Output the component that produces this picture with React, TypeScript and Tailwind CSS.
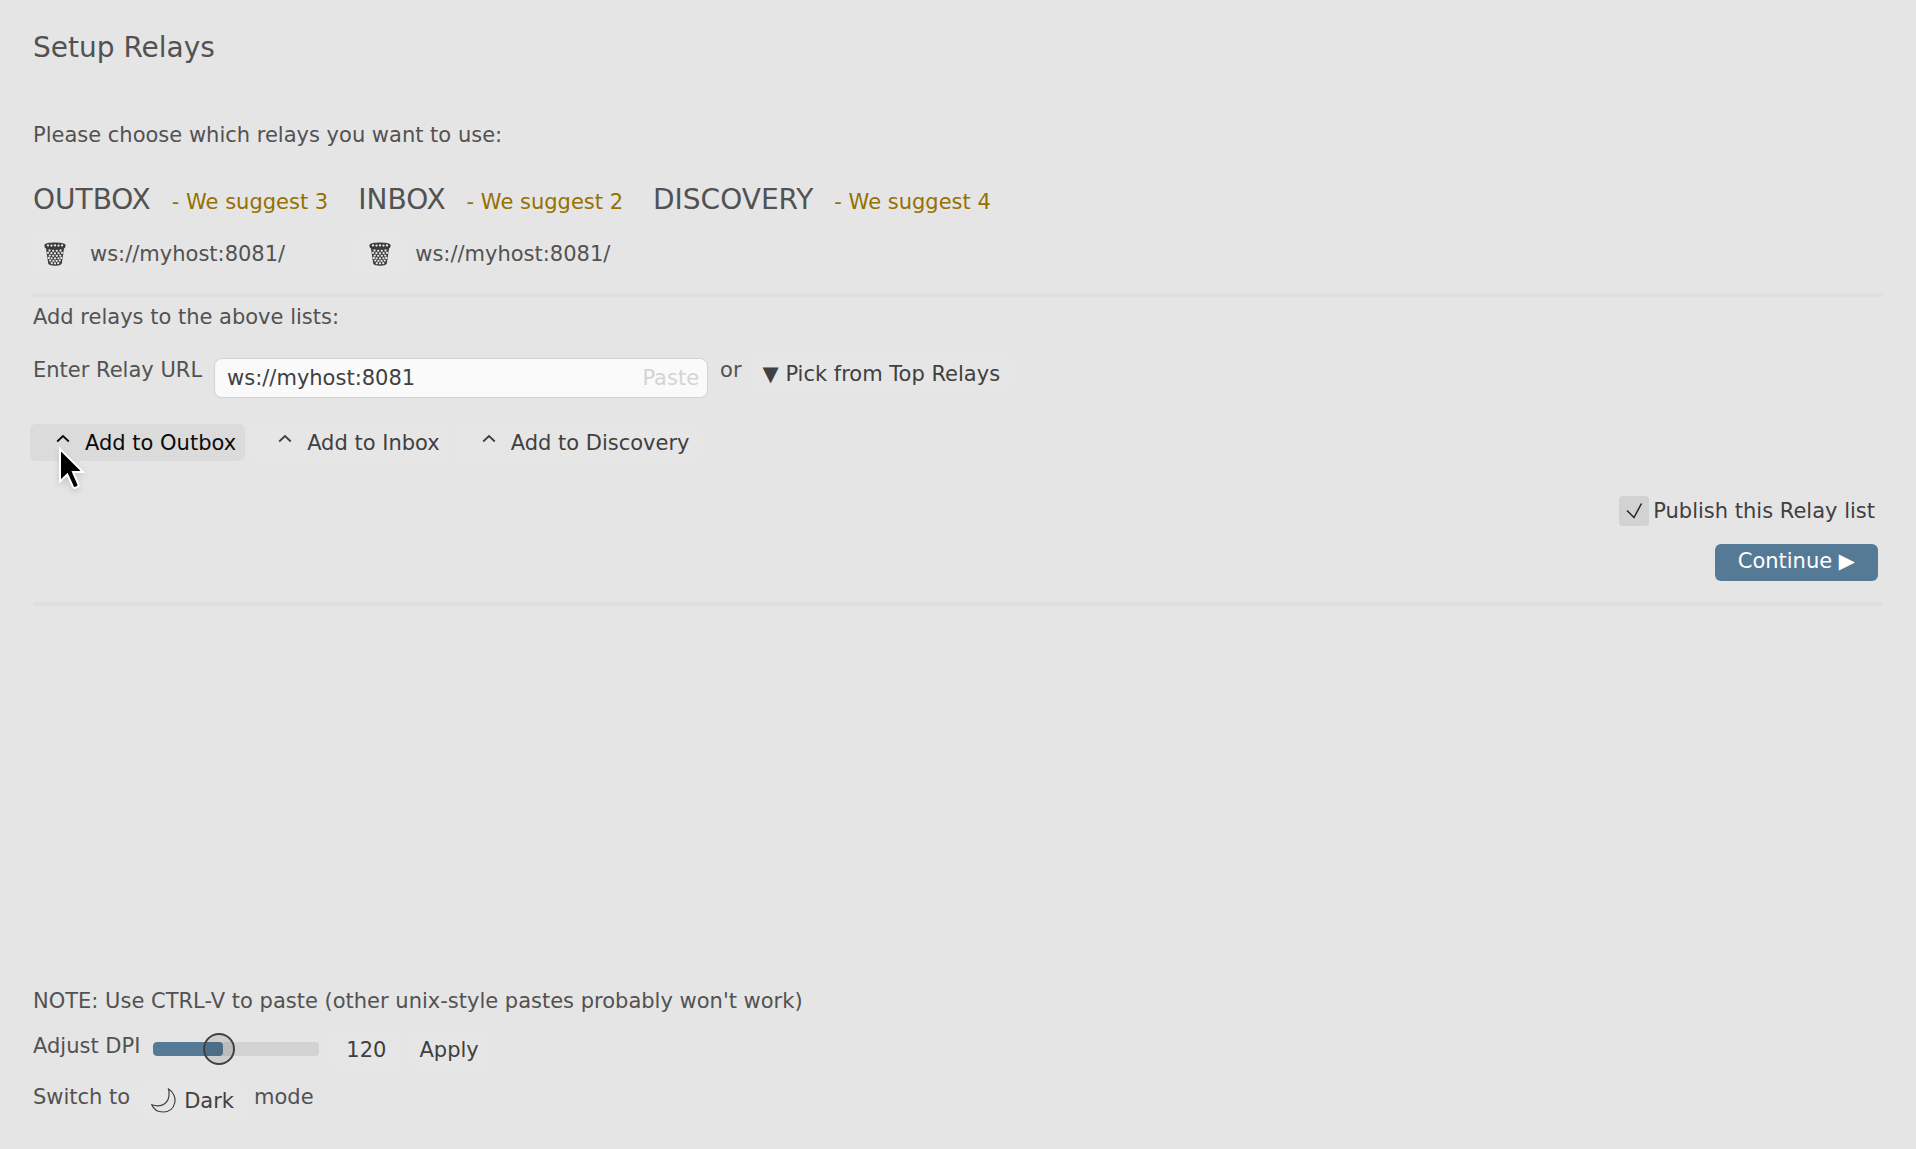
import { useState } from "react"
import type { ButtonHTMLAttributes, ReactNode } from "react"

const DPI_MIN = 50
const DPI_MAX = 240

const suggestions = [
  { name: "OUTBOX", count: 3, relays: ["ws://myhost:8081/"] },
  { name: "INBOX", count: 2, relays: ["ws://myhost:8081/"] },
  { name: "DISCOVERY", count: 4, relays: [] as string[] },
]

// wire mesh basket: dark body with the holes punched in rows
const meshHoles = [
  [4, 3.4], [7.5, 3.6], [11, 3.4], [14.5, 3.6], [18, 3.4],
  [5.5, 8.5], [9.2, 8.8], [12.8, 8.8], [16.5, 8.5],
  [4, 10.8], [7.4, 11.2], [11, 11.4], [14.6, 11.2], [18, 10.8],
  [5.8, 13.6], [9.2, 13.8], [12.8, 13.8], [16.2, 13.6],
  [4.8, 16], [7.6, 16.3], [11, 16.4], [14.4, 16.3], [17.2, 16],
  [6.2, 18.6], [9.4, 18.9], [12.6, 18.9], [15.8, 18.6],
  [7.8, 21.2], [11, 21.4], [14.2, 21.2],
]

function TrashIcon() {
  return (
    <svg width="22" height="24" viewBox="0 0 22 24" aria-hidden="true">
      <path
        d="M.5 3C1 -.2 21 -.2 21.500 3C21.800 5.500 20.500 6 20 6.500L17.800 21.500C17 24.500 5 24.500 4.200 21.500L2 6.500C1.500 6 .2 5.500 .5 3Z"
        fill="#3c3c3c"
      />
      {meshHoles.map(([x, y]) => (
        <circle key={`${x}-${y}`} cx={x} cy={y} r="1.150" fill="#e6e6e6" />
      ))}
    </svg>
  )
}

function MoonIcon() {
  return (
    <svg width="25" height="25" viewBox="0 0 25 25" fill="none" stroke="#404040" strokeWidth="1.2" aria-hidden="true">
      <path d="M17.500 1C28 7 25.500 24 12 24C6.500 24 2.500 21 .8 16.800C10 20 20.500 16 17.500 1Z" />
    </svg>
  )
}

function CaretIcon() {
  return (
    <svg width="14" height="24" viewBox="0 0 14 24" fill="none" stroke="currentColor" strokeWidth="1.8" aria-hidden="true">
      <path d="M1.200 10.500 7 5 12.800 10.500" />
    </svg>
  )
}

function Pointer() {
  return (
    <svg
      className="pointer-events-none absolute top-[22px] left-[27px] drop-shadow-md"
      width="30"
      height="46"
      viewBox="0 0 30 46"
      aria-hidden="true"
    >
      <path
        d="M3 3V35.500L10.300 28.500 16 41C17 43 22.300 41 21.500 38.500L16 26H26Z"
        fill="#000000"
        stroke="#ffffff"
        strokeWidth="2"
      />
    </svg>
  )
}

interface ButtonProps extends ButtonHTMLAttributes<HTMLButtonElement> {
  children: ReactNode
}

function FlatButton({ children, className = "", ...rest }: ButtonProps) {
  return (
    <button
      type="button"
      className={`flex h-[37px] items-center rounded-md whitespace-pre ${className}`}
      {...rest}
    >
      {children}
    </button>
  )
}

function Separator() {
  return <hr className="h-1 border-0 bg-[#dfdfdf]" />
}

export default function App() {
  const [url, setUrl] = useState("ws://myhost:8081")
  const [publish, setPublish] = useState(true)
  const [dpi, setDpi] = useState(120)

  const ratio = (dpi - DPI_MIN) / (DPI_MAX - DPI_MIN)

  return (
    <main className="flex min-h-screen flex-col bg-[#e5e5e5] px-[33px] pt-8 pb-[30px] font-['DejaVu_Sans',sans-serif] text-[21px] leading-6 text-[#525252]">
      <h1 className="text-[28px] leading-8">Setup Relays</h1>

      <p className="mt-[59px]">Please choose which relays you want to use:</p>

      <div className="mt-[37px] flex gap-[30px]">
        {suggestions.map((list) => (
          <section key={list.name}>
            <div className="flex h-8 items-baseline gap-[21px]">
              <h2 className="text-[28px] leading-8">{list.name}</h2>
              <span className="text-[#967000]">- We suggest {list.count}</span>
            </div>
            {list.relays.map((relay) => (
              <div key={relay} className="mt-[19px] -ml-[2px] flex items-center gap-[11px]">
                <FlatButton className="bg-[#e6e6e6] px-[13px]" aria-label={`Remove ${relay}`}>
                  <TrashIcon />
                </FlatButton>
                <span>{relay}</span>
              </div>
            ))}
          </section>
        ))}
      </div>

      <div className="mt-[21px]">
        <Separator />
      </div>

      <p className="mt-2">Add relays to the above lists:</p>

      <div className="mt-[26px] flex items-start">
        <label htmlFor="relay-url" className="mt-[3px]">
          Enter Relay URL
        </label>
        <div className="relative mt-[3px] ml-3 w-[494px]">
          <input
            id="relay-url"
            type="text"
            value={url}
            onChange={(e) => setUrl(e.target.value)}
            className="h-10 w-full rounded-lg border border-[#d2d2d2] bg-[#fafafa] pr-[72px] pl-3 text-[#404040] outline-none"
          />
          <button type="button" className="absolute top-2 right-[9px] text-[#d4d4d4]">
            Paste
          </button>
        </div>
        <span className="mt-[3px] ml-3">or</span>
        <FlatButton className="ml-[10px] bg-[#e6e6e6] px-[11px] text-[#404040]">▼ Pick from Top Relays</FlatButton>
      </div>

      <div className="mt-[26px] -ml-[3px] flex gap-[7px]">
        <FlatButton className="relative gap-[15px] bg-[#dbdbdb] pr-[9px] pl-[26px] text-[#0a0a0a]">
          <CaretIcon />
          Add to Outbox
          <Pointer />
        </FlatButton>
        <FlatButton className="gap-[15px] bg-[#e6e6e6] pr-[9px] pl-[26px] text-[#404040]">
          <CaretIcon />
          Add to Inbox
        </FlatButton>
        <FlatButton className="gap-[15px] bg-[#e6e6e6] pr-[9px] pl-[26px] text-[#404040]">
          <CaretIcon />
          Add to Discovery
        </FlatButton>
      </div>

      <div className="mt-[35px] flex flex-col items-end">
        <label className="mr-2 flex items-center gap-1 text-[#404040]">
          <span className="relative size-[30px]">
            <input
              type="checkbox"
              checked={publish}
              onChange={(e) => setPublish(e.target.checked)}
              className="block size-[30px] appearance-none rounded bg-[#d2d2d2]"
            />
            {publish && (
              <svg
                className="pointer-events-none absolute inset-0"
                width="30"
                height="30"
                viewBox="0 0 30 30"
                fill="none"
                stroke="#262626"
                strokeWidth="1.500"
                aria-hidden="true"
              >
                <path d="M8 14.500 15 21.500 22.500 7.500" />
              </svg>
            )}
          </span>
          Publish this Relay list
        </label>
        <FlatButton className="mt-[18px] mr-[5px] bg-[#557a95] px-[23px] pb-[3px] text-white">Continue ▶</FlatButton>
      </div>

      <div className="mt-[21px]">
        <Separator />
      </div>

      <footer className="mt-auto">
        <p>NOTE: Use CTRL-V to paste (other unix-style pastes probably won't work)</p>

        <div className="mt-[18px] flex items-start">
          <label htmlFor="dpi" className="mt-[3px]">
            Adjust DPI
          </label>
          <div className="relative ml-[13px] flex h-9 w-[166px] items-center">
            <div className="h-[14px] w-full overflow-hidden rounded bg-[#d2d2d2]">
              <div className="h-full rounded bg-[#557a95]" style={{ width: `${16 + ratio * 134 + 4}px` }} />
            </div>
            <input
              id="dpi"
              type="range"
              min={DPI_MIN}
              max={DPI_MAX}
              value={dpi}
              onChange={(e) => setDpi(Number(e.target.value))}
              className="absolute inset-0 w-full appearance-none bg-transparent [&::-webkit-slider-thumb]:size-8 [&::-webkit-slider-thumb]:appearance-none [&::-webkit-slider-thumb]:rounded-full [&::-webkit-slider-thumb]:border-2 [&::-webkit-slider-thumb]:border-[#404040] [&::-webkit-slider-thumb]:bg-black/10"
            />
          </div>
          <FlatButton className="ml-[11px] bg-[#e6e6e6] px-4 text-[#404040]">{dpi}</FlatButton>
          <FlatButton className="ml-[7px] bg-[#e6e6e6] px-[10px] text-[#404040]">Apply</FlatButton>
        </div>

        <div className="mt-[14px] flex items-start">
          <span className="mt-[3px]">Switch to</span>
          <FlatButton className="ml-[10px] gap-2 bg-[#e6e6e6] px-[11px] text-[#404040]">
            <MoonIcon />
            Dark
          </FlatButton>
          <span className="mt-[3px] ml-[9px]">mode</span>
        </div>
      </footer>
    </main>
  )
}
